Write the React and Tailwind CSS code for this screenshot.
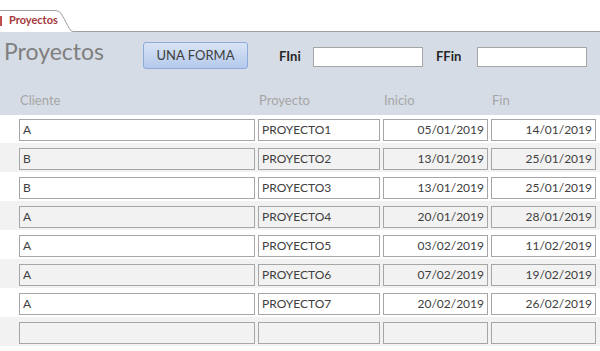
import React from 'react';

const rows = [
  { cliente: 'A', proyecto: 'PROYECTO1', inicio: '05/01/2019', fin: '14/01/2019' },
  { cliente: 'B', proyecto: 'PROYECTO2', inicio: '13/01/2019', fin: '25/01/2019' },
  { cliente: 'B', proyecto: 'PROYECTO3', inicio: '13/01/2019', fin: '25/01/2019' },
  { cliente: 'A', proyecto: 'PROYECTO4', inicio: '20/01/2019', fin: '28/01/2019' },
  { cliente: 'A', proyecto: 'PROYECTO5', inicio: '03/02/2019', fin: '11/02/2019' },
  { cliente: 'A', proyecto: 'PROYECTO6', inicio: '07/02/2019', fin: '19/02/2019' },
  { cliente: 'A', proyecto: 'PROYECTO7', inicio: '20/02/2019', fin: '26/02/2019' },
  { cliente: '', proyecto: '', inicio: '', fin: '' },
];

function Box({ value, width, right, alt }) {
  return (
    <div
      className={`h-[22px] border border-[#a6a6a6] px-[3px] text-[12px] leading-[20px] text-[#404040] truncate ${width} ${
        right ? 'text-right' : 'text-left'
      } ${alt ? 'bg-[#f2f2f2]' : 'bg-white'}`}
    >
      {value}
    </div>
  );
}

export default function App() {
  return (
    <div
      className="w-[600px] h-[351px] overflow-hidden bg-white"
      style={{ fontFamily: 'Lato, "Open Sans", sans-serif' }}
    >
      {/* tab strip */}
      <div className="flex h-[32px] items-end">
        <div className="relative h-[22px] w-[73px]">
          <svg className="absolute inset-0" width="73" height="22" viewBox="0 0 73 22">
            <path
              d="M0 0.5 H54 Q60 0.5 62 5 L69 18 Q71 21.5 73 21.5"
              fill="white"
              stroke="#a0a0a0"
              strokeWidth="1"
            />
          </svg>
          <div className="absolute left-0 top-[6px] h-[10px] w-[2px] bg-[#c0504d]" />
          <div className="relative pl-[9px] pt-[3px] text-[11px] font-bold leading-[14px] text-[#a4373a]">
            Proyectos
          </div>
        </div>
        <div className="flex-1 border-b border-[#a0a0a0]" />
      </div>

      {/* header */}
      <div className="h-[83px] bg-[#d6dce5]">
        <div className="flex items-start">
          <div className="w-[143px] pl-[4px] pt-[5px] text-[23px] leading-[28px] text-[#7f7f7f]">Proyectos</div>
          <div className="mt-[10px] flex h-[27px] w-[105px] items-center justify-center rounded-[3px] border border-[#8eaadb] bg-gradient-to-b from-[#d9e4f5] to-[#b4c9ec] text-[13px] text-[#404040]">
            UNA FORMA
          </div>
          <div className="ml-[31px] mt-[15px] flex items-center">
            <span className="w-[34px] text-[13px] font-bold text-[#262626]">FIni</span>
            <div className="h-[20px] w-[110px] border border-[#a6a6a6] bg-white" />
            <span className="ml-[13px] w-[41px] text-[13px] font-bold text-[#262626]">FFin</span>
            <div className="h-[20px] w-[110px] border border-[#a6a6a6] bg-white" />
          </div>
        </div>
        <div className="flex pt-[23px] text-[13px] leading-[16px] text-[#a6a6a6]">
          <span className="w-[259px] pl-[20px]">Cliente</span>
          <span className="w-[125px]">Proyecto</span>
          <span className="w-[108px]">Inicio</span>
          <span>Fin</span>
        </div>
      </div>

      {/* rows */}
      {rows.map((r, i) => {
        const alt = i % 2 === 1;
        return (
          <div
            key={i}
            className={`flex gap-[3px] pl-[19px] ${i === 0 ? 'h-[28px] pt-[4px]' : 'h-[29px] pt-[5px]'} ${
              alt ? 'bg-[#f2f2f2]' : 'bg-white'
            }`}
          >
            <Box value={r.cliente} width="w-[236px]" alt={alt} />
            <Box value={r.proyecto} width="w-[122px]" alt={alt} />
            <Box value={r.inicio} width="w-[105px]" right alt={alt} />
            <Box value={r.fin} width="w-[105px]" right alt={alt} />
          </div>
        );
      })}
    </div>
  );
}
